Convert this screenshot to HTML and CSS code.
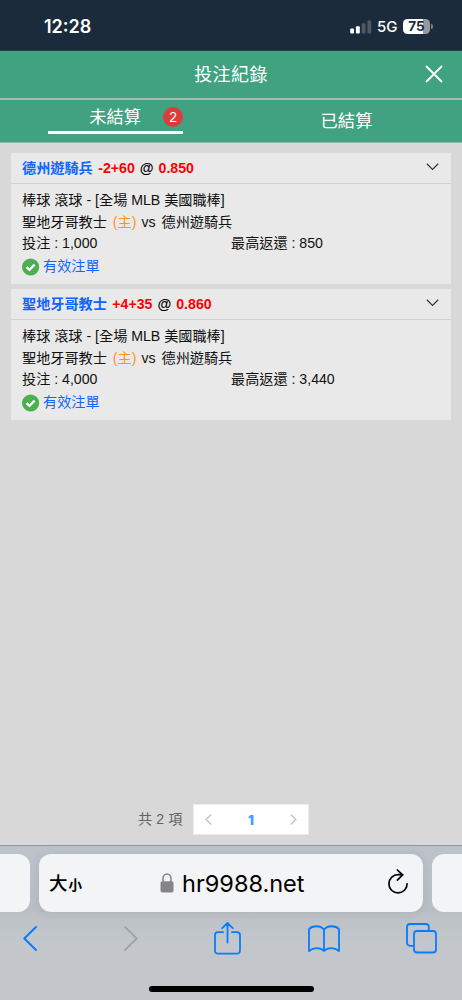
FILE: index.html
```html
<!DOCTYPE html>
<html lang="zh-Hant">
<head>
<meta charset="utf-8">
<meta name="viewport" content="width=device-width">
<title>投注紀錄</title>
<link rel="stylesheet" href="styles.css">
</head>
<body>
<div class="phone">
  <div class="status">
    <span class="clock">12:28</span>
    <svg class="signal" width="22" height="14" viewBox="0 0 22 14"><rect x="0.2" y="8.6" width="3.8" height="4.8" rx="1" fill="#fff"/><rect x="5.9" y="6.2" width="3.9" height="7.2" rx="1" fill="#fff"/><rect x="11.7" y="3.2" width="3.8" height="10.2" rx="1" fill="#4d5966"/><rect x="17.4" y="0.4" width="3.8" height="13" rx="1" fill="#4d5966"/></svg>
    <span class="network">5G</span>
    <div class="battery"><span>75</span></div>
    <i class="battery-tip"></i>
  </div>
  <header class="header">
    <h1>投注紀錄</h1>
    <svg class="close" width="18" height="18" viewBox="0 0 18 18"><path d="M1 1L17 17M17 1L1 17" fill="none" stroke="#fff" stroke-width="1.8"/></svg>
  </header>
  <nav class="tabs">
    <div class="tab active"><div class="tab-inner"><span>未結算</span><b class="badge">2</b></div></div>
    <div class="tab"><span>已結算</span></div>
  </nav>
  <main class="list">
    <section class="card">
      <div class="card-head">
        <b class="team">德州遊騎兵</b><b class="odds">-2+60</b><b class="at">@</b><b class="odds">0.850</b>
        <svg class="arrow" width="13" height="8" viewBox="0 0 13 8"><path d="M.8 .8L6.5 6.4L12.2 .8" fill="none" stroke="#333" stroke-width="1.2"/></svg>
      </div>
      <div class="card-body">
        <div class="row">棒球 滾球 - [全場 MLB 美國職棒]</div>
        <div class="row match"><span>聖地牙哥教士</span><span class="home">(主)</span><span>vs</span><span>德州遊騎兵</span></div>
        <div class="row amounts"><span>投注 : 1,000</span><span>最高返還 : 850</span></div>
        <div class="row valid"><svg width="18" height="18" viewBox="0 0 18 18"><circle cx="8.6" cy="9" r="8.6" fill="#4caf50"/><path d="M4.6 9.2L7.4 11.8L12.6 6.6" fill="none" stroke="#fff" stroke-width="2.3"/></svg><span>有效注單</span></div>
      </div>
    </section>
    <section class="card">
      <div class="card-head">
        <b class="team">聖地牙哥教士</b><b class="odds">+4+35</b><b class="at">@</b><b class="odds">0.860</b>
        <svg class="arrow" width="13" height="8" viewBox="0 0 13 8"><path d="M.8 .8L6.5 6.4L12.2 .8" fill="none" stroke="#333" stroke-width="1.2"/></svg>
      </div>
      <div class="card-body">
        <div class="row">棒球 滾球 - [全場 MLB 美國職棒]</div>
        <div class="row match"><span>聖地牙哥教士</span><span class="home">(主)</span><span>vs</span><span>德州遊騎兵</span></div>
        <div class="row amounts"><span>投注 : 4,000</span><span>最高返還 : 3,440</span></div>
        <div class="row valid"><svg width="18" height="18" viewBox="0 0 18 18"><circle cx="8.6" cy="9" r="8.6" fill="#4caf50"/><path d="M4.6 9.2L7.4 11.8L12.6 6.6" fill="none" stroke="#fff" stroke-width="2.3"/></svg><span>有效注單</span></div>
      </div>
    </section>
  </main>
  <div class="pagination">
    <span class="total">共 2 項</span>
    <div class="pager">
      <svg width="7" height="11" viewBox="0 0 7 11"><path d="M6.2 .6L1.2 5.5L6.2 10.4" fill="none" stroke="#c0c4cc" stroke-width="1.4"/></svg>
      <b>1</b>
      <svg width="7" height="11" viewBox="0 0 7 11"><path d="M.8 .6L5.8 5.5L.8 10.4" fill="none" stroke="#c0c4cc" stroke-width="1.4"/></svg>
    </div>
  </div>
  <footer class="browser">
    <div class="address-row">
      <div class="side left"></div>
      <div class="address">
        <span class="size-big">大</span><span class="size-small">小</span>
        <svg class="lock" width="14" height="20" viewBox="0 0 14 20"><path d="M3 9V5.3a4 4.3 0 0 1 8 0V9" fill="none" stroke="#858489" stroke-width="1.6"/><rect x=".5" y="8.3" width="13" height="11.2" rx="1.8" fill="#858489"/></svg>
        <span class="url">hr9988.net</span>
        <svg class="reload" width="22" height="26" viewBox="0 0 22 26"><path d="M20.1 14.8A9.1 9.1 0 1 1 11 5.7H15.8M10.4 1L15.6 5.9L10.4 11.2" fill="none" stroke="#000" stroke-width="1.7" stroke-linecap="round" stroke-linejoin="round"/></svg>
      </div>
      <div class="side right"></div>
    </div>
    <div class="toolbar">
      <svg class="back" width="14" height="25" viewBox="0 0 14 25"><path d="M13 1L1.3 12.5L13 24" fill="none" stroke="#087cfe" stroke-width="2" stroke-linecap="round" stroke-linejoin="round"/></svg>
      <svg class="forward" width="14" height="25" viewBox="0 0 14 25"><path d="M1 1L12.7 12.5L1 24" fill="none" stroke="#9fa3a7" stroke-width="1.8" stroke-linecap="round" stroke-linejoin="round"/></svg>
      <svg class="share" width="27" height="33" viewBox="0 0 27 33"><path d="M9 10.2H4a3 3 0 0 0-3 3V28.7a3 3 0 0 0 3 3H23a3 3 0 0 0 3-3V13.2a3 3 0 0 0-3-3H18M13.5 20.5V1M8.2 6.2L13.5 1L18.8 6.2" fill="none" stroke="#087cfe" stroke-width="1.8" stroke-linecap="round" stroke-linejoin="round"/></svg>
      <svg class="book" width="32" height="28" viewBox="0 0 32 28"><path d="M16 4.6C12.5.2 4.5.2 1 4.1V26C5.5 22.2 12.5 22.2 16 26C19.5 22.2 26.5 22.2 31 26V4.1C27.5.2 19.5.2 16 4.6V26" fill="none" stroke="#087cfe" stroke-width="1.8" stroke-linejoin="round"/></svg>
      <svg class="pages" width="31" height="31" viewBox="0 0 31 31"><path d="M8 22.8H4a3 3 0 0 1-3-3V4a3 3 0 0 1 3-3H19.8a3 3 0 0 1 3 3V8" fill="none" stroke="#087cfe" stroke-width="1.8"/><rect x="8" y="8" width="22" height="21.5" rx="3" fill="none" stroke="#087cfe" stroke-width="1.8"/></svg>
    </div>
    <div class="home-bar"></div>
  </footer>
</div>
</body>
</html>
```
FILE: styles.css
```css
* { box-sizing: border-box; }
body { margin: 0; }
svg { display: block; flex: none; }
.phone {
  width: 462px;
  height: 1000px;
  display: flex;
  flex-direction: column;
  overflow: hidden;
  background: #d8d8d8;
  font-family: "Liberation Sans", "Noto Sans CJK TC", sans-serif;
  color: #111;
}
.status {
  height: 51px;
  flex: none;
  background: #1c2b3b;
  border-bottom: 1px solid #234548;
  display: flex;
  align-items: center;
  padding: 3px 0 0 44px;
  color: #fff;
  font-family: Inter, sans-serif;
}
.clock { font-size: 18px; font-weight: 600; width: 306px; line-height: 22px; }
.network { font-size: 15px; font-weight: 500; margin-left: 5px; width: 26px; line-height: 20px; }
.battery {
  width: 27px;
  height: 15px;
  border-radius: 4.5px;
  background: linear-gradient(90deg, #fff 75%, #929aa2 75%);
  color: #1c2b3b;
  font-size: 13.5px;
  line-height: 15px;
  font-weight: 700;
  text-align: center;
}
.battery-tip { width: 1.5px; height: 5px; margin-left: 1px; background: #7b858f; border-radius: 0 2px 2px 0; }
.header {
  height: 49px;
  flex: none;
  background: #41a281;
  border-bottom: 2px solid #9cbfb1;
  display: grid;
  grid-template-columns: 1fr auto 1fr;
  align-items: center;
  color: #fff;
}
.header h1 { grid-column: 2; margin: 0; font-size: 18px; font-weight: 400; letter-spacing: .4px; line-height: 46px; }
.close { justify-self: end; margin-right: 19px; margin-bottom: 1px; }
.tabs {
  height: 43px;
  flex: none;
  background: #41a281;
  border-bottom: 1px solid #8fbba9;
  display: grid;
  grid-template-columns: 1fr 1fr;
  color: #fff;
  font-size: 17.3px;
  font-weight: 400;
}
.tab { display: flex; justify-content: center; line-height: 43px; }
.tab-inner { width: 135px; height: 34px; border-bottom: 3px solid #fff; display: flex; align-items: center; justify-content: flex-end; gap: 22px; line-height: 32px; }
.tab-inner span { padding-top: 2px; }
.badge { width: 20px; height: 20px; border-radius: 50%; background: #db3d3a; font: 400 13.5px/20px Inter, sans-serif; text-align: center; margin-top: 3px; }
.list { padding: 10px 11px 0 11px; display: flex; flex-direction: column; gap: 5px; font-size: 14.15px; }
.card { background: #e9e9e9; height: 131px; }
.card-head { height: 31px; border-bottom: 1px solid #d0d0d0; padding: 0 12px 0 11px; display: flex; align-items: center; line-height: 30px; }
.team { color: #0f66ff; margin-right: 5.5px; }
.odds { color: #ff0000; }
.at { color: #000; margin: 0 5px; font-weight: 600; }
.arrow { margin: 0 0 3px auto; }
.card-body { padding: 6px 11px 0; }
.row { height: 21.6px; line-height: 21.6px; white-space: pre; }
.match { display: flex; }
.match .home { color: #ff9419; margin: 0 5px 0 6px; }
.match span:last-child { margin-left: 6px; }
.amounts { display: grid; grid-template-columns: 209px 1fr; }
.valid { display: flex; align-items: center; gap: 3px; color: #0f66ff; height: 24px; }
.pagination { margin-top: auto; height: 41px; flex: none; display: flex; padding-left: 138px; }
.total { width: 55px; font-size: 14px; line-height: 31px; color: #606266; letter-spacing: .2px; }
.pager { width: 116px; height: 31px; background: #fff; border: 1px solid #ececec; display: flex; align-items: center; justify-content: space-between; padding: 0 11px; color: #409eff; font: 700 13px/28px Inter, sans-serif; }
.browser { height: 155px; flex: none; background: #c3c7cc; border-top: 1px solid #8f959c; }
.address-row { display: flex; justify-content: space-between; padding-top: 8px; height: 66px; background: linear-gradient(#bcc3ca, #b9bec4); }
.side { width: 30px; height: 58px; background: #f2f4f6; }
.left { border-radius: 0 12px 12px 0; }
.right { border-radius: 12px 0 0 12px; }
.address { width: 384px; height: 58px; border-radius: 12px; background: #f2f4f6; box-shadow: 0 1px 8px rgba(60,70,80,.12); display: flex; align-items: center; padding: 1px 14px 0 10px; color: #000; }
.size-big { font-size: 18.5px; font-weight: 500; line-height: 24px; }
.size-small { font-size: 13.5px; font-weight: 700; line-height: 20px; margin: 4px 0 0 1px; }
.lock { margin-left: 78px; margin-bottom: 1px; }
.url { font: 400 23.5px/28px Inter, sans-serif; letter-spacing: 0; margin-left: 8px; }
.reload { margin-left: auto; margin-bottom: 3px; }
.toolbar { display: flex; height: 50px; align-items: center; padding: 3px 0 0 23px; background: linear-gradient(#bcc1c6, #c3c7cc 60%); }
.forward { margin-left: 87px; }
.share { margin: 0 0 1px 76px; }
.book { margin-left: 67px; }
.pages { margin-left: 66px; }
.home-bar { width: 165px; height: 6px; border-radius: 3px; background: #000; margin: 24px auto 0; }
```
